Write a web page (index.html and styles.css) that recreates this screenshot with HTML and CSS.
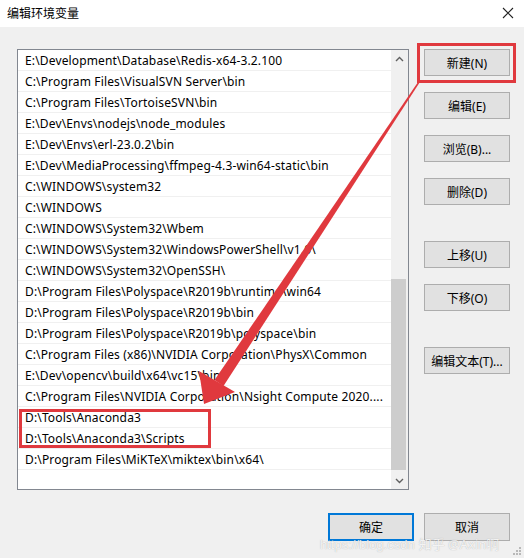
FILE: index.html
```html
<!DOCTYPE html>
<html lang="zh-CN">
<head>
<meta charset="utf-8">
<title>编辑环境变量</title>
<link rel="stylesheet" href="styles.css">
</head>
<body>
<div class="window">
  <div class="titlebar">
    <span class="title">编辑环境变量</span>
    <svg class="close" width="12" height="12" viewBox="0 0 12 12"><path d="M1 1 L11 11 M11 1 L1 11" stroke="#222" stroke-width="1.1" fill="none"/></svg>
  </div>
  <div class="content">
    <div class="main">
      <div class="listbox">
        <ul class="rows">
          <li>E:\Development\Database\Redis-x64-3.2.100</li>
          <li>C:\Program Files\VisualSVN Server\bin</li>
          <li>C:\Program Files\TortoiseSVN\bin</li>
          <li>E:\Dev\Envs\nodejs\node_modules</li>
          <li>E:\Dev\Envs\erl-23.0.2\bin</li>
          <li>E:\Dev\MediaProcessing\ffmpeg-4.3-win64-static\bin</li>
          <li>C:\WINDOWS\system32</li>
          <li>C:\WINDOWS</li>
          <li>C:\WINDOWS\System32\Wbem</li>
          <li>C:\WINDOWS\System32\WindowsPowerShell\v1.0\</li>
          <li>C:\WINDOWS\System32\OpenSSH\</li>
          <li>D:\Program Files\Polyspace\R2019b\runtime\win64</li>
          <li>D:\Program Files\Polyspace\R2019b\bin</li>
          <li>D:\Program Files\Polyspace\R2019b\polyspace\bin</li>
          <li>C:\Program Files (x86)\NVIDIA Corporation\PhysX\Common</li>
          <li>E:\Dev\opencv\build\x64\vc15\bin</li>
          <li>C:\Program Files\NVIDIA Corporation\Nsight Compute 2020....</li>
          <li>D:\Tools\Anaconda3</li>
          <li>D:\Tools\Anaconda3\Scripts</li>
          <li>D:\Program Files\MiKTeX\miktex\bin\x64\</li>
          <li class="empty"></li>
        </ul>
        <div class="scrollbar">
          <div class="sb-btn"><svg width="9" height="6" viewBox="0 0 9 6"><path d="M1 5 L4.5 1.5 L8 5" stroke="#606060" stroke-width="1.4" fill="none"/></svg></div>
          <div class="sb-track"><div class="sb-thumb" style="margin-top:212px;height:191px"></div></div>
          <div class="sb-btn"><svg width="9" height="6" viewBox="0 0 9 6"><path d="M1 1 L4.5 4.5 L8 1" stroke="#606060" stroke-width="1.4" fill="none"/></svg></div>
        </div>
      </div>
      <div class="side">
        <div class="group">
          <button class="btn">新建(N)</button>
          <button class="btn">编辑(E)</button>
          <button class="btn">浏览(B)...</button>
          <button class="btn">删除(D)</button>
        </div>
        <div class="group">
          <button class="btn">上移(U)</button>
          <button class="btn">下移(O)</button>
        </div>
        <div class="group">
          <button class="btn">编辑文本(T)...</button>
        </div>
      </div>
    </div>
    <div class="footer">
      <button class="btn default">确定</button>
      <button class="btn">取消</button>
    </div>
  </div>
  <div class="watermark">
    <span class="wm-url">https://blog.csdn</span>
    <span class="wm-zh">知乎 @Axin啊</span>
  </div>
  <svg class="grip" width="8" height="8" viewBox="0 0 8 8">
    <rect x="6" y="0" width="2" height="2" fill="#b8b8b8"/>
    <rect x="3" y="3" width="2" height="2" fill="#b8b8b8"/>
    <rect x="6" y="3" width="2" height="2" fill="#b8b8b8"/>
    <rect x="0" y="6" width="2" height="2" fill="#b8b8b8"/>
    <rect x="3" y="6" width="2" height="2" fill="#b8b8b8"/>
    <rect x="6" y="6" width="2" height="2" fill="#b8b8b8"/>
  </svg>
  <svg class="annot" width="524" height="558" viewBox="0 0 524 558">
    <rect x="418.5" y="44.5" width="96" height="37" fill="none" stroke="#e0393e" stroke-width="3"/>
    <rect x="20.5" y="410.5" width="189" height="36" fill="none" stroke="#e0393e" stroke-width="3"/>
    <polygon points="419.6,82.4 418.4,81.6 214.5,380 223.5,386" fill="#e0393e"/>
    <polygon points="204,404 199,371 235,392" fill="#e0393e"/>
  </svg>
</div>
</body>
</html>
```
FILE: styles.css
```css
* { box-sizing: border-box; }
html, body { margin: 0; padding: 0; }
body {
  width: 524px;
  height: 558px;
  overflow: hidden;
  background: #f0f0f0;
  font-family: "Noto Sans", "Noto Sans CJK SC", sans-serif;
  font-size: 12px;
  color: #000;
}
.window {
  position: relative;
  width: 524px;
  height: 558px;
  display: flex;
  flex-direction: column;
}
.titlebar {
  height: 27px;
  background: #fff;
  display: flex;
  align-items: center;
  justify-content: space-between;
  padding: 0 10px 2px 7px;
}
.title { font-size: 12px; }
.close { display: block; }
.content {
  flex: 1;
  display: flex;
  flex-direction: column;
  padding: 22px 0 0 17px;
}
.main {
  display: flex;
  gap: 15px;
}
.listbox {
  width: 392px;
  height: 441px;
  border: 1px solid #828790;
  background: #fff;
  display: flex;
}
.rows {
  list-style: none;
  margin: 0;
  padding: 0;
  flex: 1;
  overflow: hidden;
}
.rows li {
  height: 21px;
  line-height: 21px;
  padding-left: 7px;
  border-bottom: 1px solid #f0f0f0;
  white-space: nowrap;
  overflow: hidden;
  letter-spacing: 0.15px;
}
.rows li.empty { border-bottom: none; }
.scrollbar {
  width: 17px;
  background: #f0f0f0;
  display: flex;
  flex-direction: column;
}
.sb-btn {
  height: 17px;
  display: flex;
  align-items: center;
  justify-content: center;
}
.sb-track { flex: 1; }
.sb-thumb {
  width: 15px;
  background: #cdcdcd;
}
.side {
  display: flex;
  flex-direction: column;
  gap: 36px;
}
.group {
  display: flex;
  flex-direction: column;
  gap: 16px;
}
.btn {
  width: 86px;
  height: 27px;
  background: #e1e1e1;
  border: 1px solid #adadad;
  font-family: inherit;
  font-size: 12px;
  color: #000;
  padding: 0;
  margin: 0;
}
.btn.default {
  border: 2px solid #0078d7;
}
.footer {
  display: flex;
  justify-content: flex-end;
  gap: 10px;
  padding: 23px 14px 0 0;
}
.footer .btn { height: 28px; }
.watermark {
  position: absolute;
  left: 320px;
  top: 534px;
  display: flex;
  align-items: baseline;
  gap: 4px;
  pointer-events: none;
  color: rgba(255,255,255,0.85);
  text-shadow: 0 0 1px rgba(120,120,120,0.6);
  white-space: nowrap;
}
.wm-url { font-family: "Liberation Sans", sans-serif; font-size: 13px; }
.wm-zh { font-size: 13px; }
.grip {
  position: absolute;
  right: 3px;
  bottom: 3px;
}
.annot {
  position: absolute;
  left: 0;
  top: 0;
  pointer-events: none;
}
```
